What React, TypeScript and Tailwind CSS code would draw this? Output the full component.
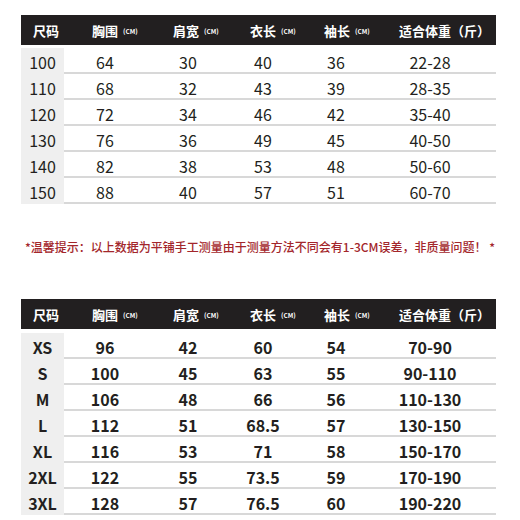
import React from "react";

const FONT = { fontFamily: '"Noto Sans CJK SC", "Noto Sans", sans-serif' };

const headers = [
  { label: "尺码", cm: false, pl: "pl-[12px]" },
  { label: "胸围", cm: true, pl: "pl-[28px]" },
  { label: "肩宽", cm: true, pl: "pl-[27px]" },
  { label: "衣长", cm: true, pl: "pl-[20px]" },
  { label: "袖长", cm: true, pl: "pl-[28px]" },
  { label: "适合体重（斤）", cm: false, pl: "pl-[23px]" },
];

const kids = [
  ["100", "64", "30", "40", "36", "22-28"],
  ["110", "68", "32", "43", "39", "28-35"],
  ["120", "72", "34", "46", "42", "35-40"],
  ["130", "76", "36", "49", "45", "40-50"],
  ["140", "82", "38", "53", "48", "50-60"],
  ["150", "88", "40", "57", "51", "60-70"],
];

const adults = [
  ["XS", "96", "42", "60", "54", "70-90"],
  ["S", "100", "45", "63", "55", "90-110"],
  ["M", "106", "48", "66", "56", "110-130"],
  ["L", "112", "51", "68.5", "57", "130-150"],
  ["XL", "116", "53", "71", "58", "150-170"],
  ["2XL", "122", "55", "73.5", "59", "170-190"],
  ["3XL", "128", "57", "76.5", "60", "190-220"],
];

const cols = "grid grid-cols-[43px_82px_84px_66px_80px_120px]";

function SizeTable({ rows, bold }: { rows: string[][]; bold?: boolean }) {
  return (
    <div className="w-[475px] ml-[21px]">
      <div className={`${cols} h-[30px] bg-[#221f20] text-white`}>
        {headers.map((h) => (
          <div key={h.label} className={`flex items-center ${h.pl} text-[13px] font-bold leading-none`}>
            <span>{h.label}</span>
            {h.cm && <span className="ml-[5px] mt-[3px] text-[6.5px] font-bold">(CM)</span>}
          </div>
        ))}
      </div>
      {rows.map((r, i) => (
        <div
          key={r[0]}
          className={`${cols} ${i === 0 ? (bold ? "h-[30px] pt-[4px]" : "h-[29px] pt-[3px]") : "h-[26px]"} border-b-2 border-[#d8d8d8] text-[16px] text-[#231f20] ${bold ? "font-semibold" : "font-normal"}`}
        >
          {r.map((c, j) => (
            <div
              key={j}
              className={`flex items-center justify-center pt-[2px] ${j === 0 ? "bg-[#efefef]" : ""} ${j === 5 ? "pr-[12px]" : ""}`}
            >
              {c}
            </div>
          ))}
        </div>
      ))}
    </div>
  );
}

export default function App() {
  return (
    <div className="w-[520px] h-[520px] bg-white overflow-hidden" style={FONT}>
      <div className="pt-[15px]">
        <SizeTable rows={kids} />
      </div>
      <p className="mt-[37px] ml-[25px] text-[12px] font-medium leading-none text-[#a3262b] whitespace-nowrap">
        *温馨提示：以上数据为平铺手工测量由于测量方法不同会有1-3CM误差，非质量问题！ *
      </p>
      <div className="mt-[46px]">
        <SizeTable rows={adults} bold />
      </div>
    </div>
  );
}
